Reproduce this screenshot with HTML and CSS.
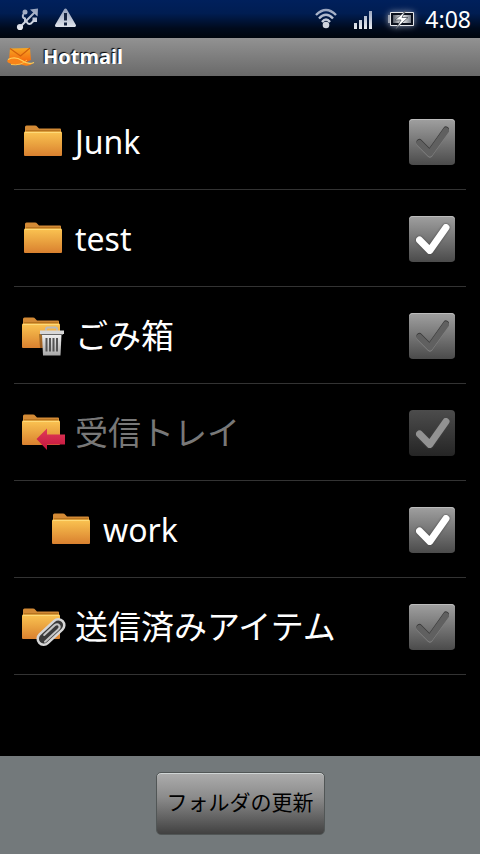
FILE: index.html
```
<!DOCTYPE html>
<html lang="ja">
<head>
<meta charset="utf-8">
<meta name="viewport" content="width=device-width, initial-scale=1">
<title>Hotmail</title>
<link rel="stylesheet" href="styles.css">
</head>
<body>
<svg class="defs" aria-hidden="true">
  <defs>
    <linearGradient id="front" x1="0" y1="0" x2="0" y2="1"><stop offset="0" stop-color="#fbc452"/><stop offset=".5" stop-color="#eaa340"/><stop offset="1" stop-color="#d9802f"/></linearGradient>
    <linearGradient id="metal" x1="0" y1="0" x2="0" y2="1"><stop offset="0" stop-color="#f2f2f2"/><stop offset="1" stop-color="#a8a8a8"/></linearGradient>
    <linearGradient id="status" gradientUnits="userSpaceOnUse" x1="0" y1="0" x2="0" y2="24"><stop offset="0" stop-color="#8d9bb8"/><stop offset="1" stop-color="#f0f2f5"/></linearGradient>
    <linearGradient id="red" x1="0" y1="0" x2="0" y2="1"><stop offset="0" stop-color="#e03a58"/><stop offset="1" stop-color="#c4143c"/></linearGradient>
    <linearGradient id="mail" x1="0" y1="0" x2="0" y2="1"><stop offset="0" stop-color="#f7a823"/><stop offset="1" stop-color="#f5640c"/></linearGradient>
    <linearGradient id="cell" x1="0" y1="0" x2="1" y2="0"><stop offset="0" stop-color="#555b66"/><stop offset=".5" stop-color="#f4f4f4"/><stop offset="1" stop-color="#777d88"/></linearGradient>
  </defs>
  <symbol id="folder" viewBox="0 0 38 31">
    <path d="M1 10V2q0-1.500 1.500-1.500H11q1.500 0 2.300 1.200L15 3.500H36q1 0 1 1V10z" fill="#d38a35"/>
    <path d="M2 5H36V8H2z" fill="#b87420"/>
    <path d="M1 6.500H37Q38 6.500 38 8V30q0 1-1 1H1q-1 0-1-1V8Q0 6.500 1 6.500z" fill="url(#front)"/>
    <path d="M1 7.500H37" stroke="#ffda78"/>
  </symbol>
  <symbol id="tick" viewBox="0 0 46 46"><path d="M10.500 24 20.800 34.500 37 11.500" fill="none" stroke-linecap="round" stroke-linejoin="round"/></symbol>
</svg>

<div class="status-bar">
  <div class="status-group">
    <svg width="24" height="24" viewBox="0 0 24 24" aria-label="USB">
      <g fill="none" stroke="url(#status)" stroke-width="2"><path d="M4 20 19 5"/><path d="M9 15V11.500Q5.500 10.500 7.500 7"/><path d="M10.500 14Q11.500 18 15 16.500L18 13.500"/></g>
      <g fill="url(#status)"><circle cx="4" cy="20" r="3.100"/><path d="M14 2.500 22 1.500l-.5 8z"/><circle cx="9" cy="5" r="2.500"/><path d="M16.500 10.500h4.500v4.500h-4.500z"/></g>
    </svg>
    <svg width="24" height="24" viewBox="0 0 24 24" aria-label="警告">
      <path d="M11.500 3 20.500 18.500h-18z" fill="url(#status)" stroke="url(#status)" stroke-width="3" stroke-linejoin="round"/>
      <path d="M11.500 6v7.500M11.500 15.500v3" stroke="#15233f" stroke-width="3"/>
    </svg>
  </div>
  <div class="status-group">
    <svg width="24" height="24" viewBox="0 0 24 24" aria-label="Wi-Fi">
      <g fill="none" stroke="url(#status)" stroke-width="2.400"><path d="M1 8Q11-2 21 8"/><path d="M4 11.500Q11 4 18 11.500"/><path d="M7 15Q11 10 15 15"/></g>
      <circle cx="11" cy="18" r="3.300" fill="#d0d5de"/>
    </svg>
    <svg width="20" height="24" viewBox="0 0 20 24" aria-label="電波">
      <g fill="url(#status)"><path d="M1 16h3v6H1zM6 13h3v9H6zM11 9h3v13h-3zM16 4h3v18h-3z"/></g>
    </svg>
    <svg class="battery" width="28" height="24" viewBox="0 0 28 24" aria-label="充電中">
      <path d="M3.500 5.500h23v13h-23z" fill="#0b101c" stroke="#e6e8ec"/>
      <path d="M1 8h2v8H1z" fill="#9da4b2"/><path d="M6 8h18v8H6z" fill="url(#cell)"/>
      <path d="M18.500 4 8 13h6l-5 8.500L21 10.500h-6z" fill="#fff" stroke="#4a505b" stroke-width=".8"/>
    </svg>
    <time class="clock">4:08</time>
  </div>
</div>

<header class="title-bar">
  <svg width="28" height="20" viewBox="0 0 28 20" aria-hidden="true">
    <path d="M3 1.500 23 1 24 13Q18 17 10 14L2 13z" fill="url(#mail)"/>
    <path d="M3 1.500 13.500 9 23 1" fill="none" stroke="#d2600c" stroke-width="1.200"/>
    <path d="M1 12.500Q8 9 15 13.500 21 18 27 15.500 22 20.500 14 17.500 6 19 1 15.500-.5 14 1 12.500z" fill="#f98318"/>
    <path d="M1 12.500Q8 9 15 13.500 21 18 27 15.500" fill="none" stroke="#ffd05a" stroke-width="1.200"/>
    <path d="M4 17.500Q14 19 20 13" fill="none" stroke="#ffc04a" stroke-width="1"/>
  </svg>
  <h1>Hotmail</h1>
</header>

<main>
  <ul class="folders">
    <li><label class="row">
      <svg class="icon" viewBox="0 0 48 48" aria-hidden="true"><use href="#folder" x="4" y="7" width="38" height="31"/></svg>
      <span class="name">Junk</span>
      <span class="check"><input type="checkbox"><svg class="mark" viewBox="0 0 46 46" aria-hidden="true"><use href="#tick"/></svg></span>
    </label></li>
    <li><label class="row">
      <svg class="icon" viewBox="0 0 48 48" aria-hidden="true"><use href="#folder" x="4" y="7" width="38" height="31"/></svg>
      <span class="name">test</span>
      <span class="check"><input type="checkbox" checked><svg class="mark" viewBox="0 0 46 46" aria-hidden="true"><use href="#tick"/></svg></span>
    </label></li>
    <li><label class="row">
      <svg class="icon" viewBox="0 0 48 48" aria-hidden="true"><use href="#folder" x="2" y="5" width="38" height="31"/>
        <path d="M19 22H40V36H20z" fill="#40220a" opacity=".4"/>
        <path d="M26 18.500v-1.500q0-1.500 1.500-1.500h8q1.500 0 1.500 1.500v1.500" fill="none" stroke="#b9b9b9" stroke-width="2"/>
        <path d="M22 22h19.500l-1 21.500H23z" fill="url(#metal)"/>
        <path d="M20 18.500h24V22H20z" fill="#d8d8d8"/><path d="M21 22.500h22" stroke="#686868"/>
        <path d="M26.500 26v13.500M30 26v13.500M33.500 26v13.500M37 26v13.500" stroke="#555" stroke-width="2"/>
      </svg>
      <span class="name name-ja">ごみ箱</span>
      <span class="check"><input type="checkbox"><svg class="mark" viewBox="0 0 46 46" aria-hidden="true"><use href="#tick"/></svg></span>
    </label></li>
    <li><label class="row">
      <svg class="icon" viewBox="0 0 48 48" aria-hidden="true"><use href="#folder" x="2" y="5" width="38" height="31"/>
        <path d="M16.500 30 27 19.500V25.500H45V35.500H27V41z" fill="url(#red)"/>
      </svg>
      <span class="name name-ja">受信トレイ</span>
      <span class="check"><input type="checkbox" checked disabled><svg class="mark" viewBox="0 0 46 46" aria-hidden="true"><use href="#tick"/></svg></span>
    </label></li>
    <li><label class="row nested">
      <svg class="icon" viewBox="0 0 48 48" aria-hidden="true"><use href="#folder" x="4" y="7" width="38" height="31"/></svg>
      <span class="name">work</span>
      <span class="check"><input type="checkbox" checked><svg class="mark" viewBox="0 0 46 46" aria-hidden="true"><use href="#tick"/></svg></span>
    </label></li>
    <li><label class="row">
      <svg class="icon" viewBox="0 0 48 48" aria-hidden="true"><use href="#folder" x="2" y="5" width="38" height="31"/>
        <g transform="translate(31 29) rotate(47)" fill="none" stroke-linecap="round">
          <rect x="-6" y="-16" width="12" height="32" rx="6" fill="#3a3a3a" stroke="#d6d6d6" stroke-width="2.500"/>
          <path d="M3 11V-7q0-3.500-2.500-3.500T-2.500-7V7" stroke="#c4c4c4" stroke-width="2"/>
        </g>
      </svg>
      <span class="name name-ja">送信済みアイテム</span>
      <span class="check"><input type="checkbox"><svg class="mark" viewBox="0 0 46 46" aria-hidden="true"><use href="#tick"/></svg></span>
    </label></li>
  </ul>
</main>

<footer>
  <button type="button">フォルダの更新</button>
</footer>
</body>
</html>
```
FILE: styles.css
```
* { box-sizing: border-box; }

body {
  margin: 0;
  min-height: 100vh;
  display: flex;
  flex-direction: column;
  background: #000;
  color: #fff;
  font-family: "Noto Sans", "Noto Sans CJK JP", sans-serif;
}

svg { display: block; flex: none; }

.defs { position: absolute; width: 0; height: 0; }

.status-bar {
  display: flex;
  justify-content: space-between;
  align-items: center;
  height: 38px;
  padding: 0 9px 0 16px;
  background: linear-gradient(#00205c, #001d52 35%, #000a1c 75%, #00050c);
}

.status-group { display: flex; align-items: center; gap: 14px; }
.battery { filter: drop-shadow(0 0 3px #8b93a5); }

.clock { margin-left: -4px; font-size: 23px; line-height: 38px; }

.title-bar {
  display: flex;
  align-items: center;
  gap: 8px;
  height: 38px;
  padding: 0 7px;
  background: linear-gradient(#929292, #696969);
}

h1 {
  margin: 0;
  font-size: 20px;
  line-height: 36px;
  font-weight: 700;
  text-shadow: -1px -1px 1px #000;
}

main { flex: 1; padding: 17px 14px 0; }

.folders { margin: 0; padding: 0; list-style: none; }

.row {
  display: flex;
  align-items: center;
  gap: 7px;
  height: 97px;
  padding: 2px 11px 0 6px;
  border-bottom: 1px solid #333;
}

.nested { padding-left: 34px; }

.icon { width: 48px; height: 48px; }

.name { flex: 1; font-size: 32px; line-height: 48px; font-weight: 400; }
.name-ja { font-size: 33px; }
.row:has(:disabled) .name { color: #787878; }

.check { display: grid; width: 46px; height: 46px; }
.check > * { grid-area: 1 / 1; }

.check input {
  appearance: none;
  width: 46px;
  height: 46px;
  margin: 0;
  border-radius: 4px;
  background: linear-gradient(#a0a0a0, #4b4b4b);
  box-shadow: inset 0 1px #bcbcbc;
}

.mark {
  width: 46px;
  height: 46px;
  pointer-events: none;
  stroke: #606060;
  stroke-width: 6px;
  filter: drop-shadow(0 -1px 0 #3a3a3a) drop-shadow(0 1px 0 #808080);
}

.check input:checked + .mark { stroke: #fff; stroke-width: 7px; filter: drop-shadow(0 0 1px #444); }
.check input:disabled { background: linear-gradient(#4c4c4c, #252525); box-shadow: none; }
.check input:disabled + .mark { stroke: #929292; }

footer {
  display: flex;
  justify-content: center;
  padding: 16px;
  background: #73797b;
}

button {
  height: 63px;
  margin: 0 0 3px;
  padding: 0 10px 3px;
  border: 1px solid #515656;
  border-radius: 5px;
  background: linear-gradient(#adadad, #8b8b8b 40%, #414141);
  box-shadow: inset 0 1px #d0d5d5;
  color: #000;
  font: 21px/32px "Noto Sans", "Noto Sans CJK JP", sans-serif;
}
```
